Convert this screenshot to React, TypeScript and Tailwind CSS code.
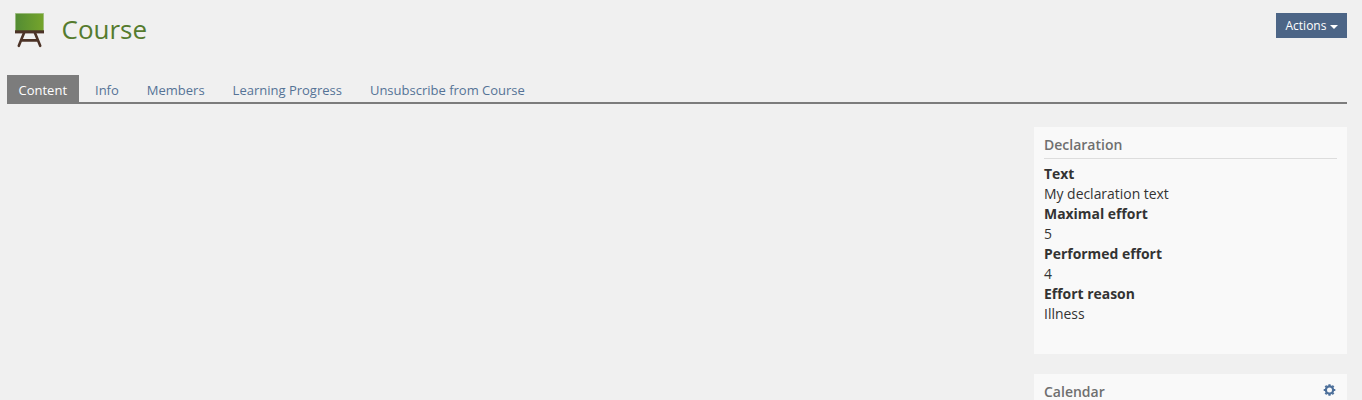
const tabs = ["Content", "Info", "Members", "Learning Progress", "Unsubscribe from Course"];

const declaration = [
  { label: "Text", value: "My declaration text" },
  { label: "Maximal effort", value: "5" },
  { label: "Performed effort", value: "4" },
  { label: "Effort reason", value: "Illness" },
];

function CourseIcon() {
  return (
    <svg className="h-[45px] w-[45px]" viewBox="0 0 45 45" fill="none">
      <defs>
        <linearGradient id="board" x1="8" y1="0" x2="37" y2="0" gradientUnits="userSpaceOnUse">
          <stop offset="0" stopColor="#528b33" />
          <stop offset="1" stopColor="#76a52b" />
        </linearGradient>
      </defs>
      <path d="M17 25 L11.8 37.8 M28 25 L33.2 37.8 M14.6 32.4 H30.4" stroke="#4c3327" strokeWidth="2.6" strokeLinecap="round" />
      <rect x="8" y="5" width="29" height="18" fill="#a9c48f" />
      <rect x="8.8" y="5.8" width="27.4" height="17.2" fill="url(#board)" />
      <rect x="8" y="22.3" width="29" height="3.1" fill="#4c3327" />
    </svg>
  );
}

function GearIcon() {
  return (
    <svg className="h-3 w-[13px]" viewBox="-0.5 0 13 12" fill="none" stroke="#4c6f9a">
      <circle cx="6" cy="6" r="3.6" strokeWidth="2.2" />
      <path
        d="M6 0.2 V2 M6 10 V11.8 M0.2 6 H2 M10 6 H11.8 M1.9 1.9 L3 3 M9 9 L10.1 10.1 M1.9 10.1 L3 9 M9 3 L10.1 1.9"
        strokeWidth="2.2"
      />
    </svg>
  );
}

export default function App() {
  return (
    <div className="h-[400px] overflow-hidden bg-[#f0f0f0] pl-[7px] pr-[15px] font-['Open_Sans',sans-serif] text-sm leading-5 text-[#333]">
      <header className="flex h-[75px] items-start justify-between">
        <div className="flex pt-2">
          <CourseIcon />
          <h1 className="ml-[9.5px] mt-[3px] text-[26px] leading-9 text-[#557b2e]">Course</h1>
        </div>
        <button className="mt-[13px] flex h-[25px] w-[71px] items-center justify-start gap-[3.5px] bg-[#4c6586] pl-[9.5px] text-xs text-white">
          Actions
          <svg className="mt-[3px] h-1 w-2 shrink-0" viewBox="0 0 8 4">
            <path d="M0 0H8L4 4Z" fill="white" />
          </svg>
        </button>
      </header>

      <nav className="flex h-[29px] border-b-2 border-[#7c7c7c] text-[13px] leading-[30px]">
        {tabs.map((tab, i) => (
          <a
            key={tab}
            className={
              i === 0
                ? "mr-[2px] h-[27px] w-[72px] bg-[#7c7c7c] pl-[11.5px] text-white"
                : "h-[27px] px-[14px] text-[#557396]"
            }
          >
            {tab}
          </a>
        ))}
      </nav>

      <aside className="ml-auto mt-[23px] flex w-[313px] flex-col gap-5">
        <section className="h-[227px] bg-[#f9f9f9] px-[10px]">
          <h2 className="h-8 border-b border-[#dddddd] pt-2 font-semibold text-[#6f6f6f]">Declaration</h2>
          <dl className="pt-[5px] text-[13.93px]">
            {declaration.map((item) => (
              <div key={item.label}>
                <dt className="font-bold">{item.label}</dt>
                <dd>{item.value}</dd>
              </div>
            ))}
          </dl>
        </section>
        <section className="flex h-[60px] items-start justify-between bg-[#f9f9f9] px-[10px]">
          <h2 className="pt-2 font-semibold text-[#6f6f6f]">Calendar</h2>
          <button className="mr-[1px] mt-[10px]" aria-label="Settings">
            <GearIcon />
          </button>
        </section>
      </aside>
    </div>
  );
}
